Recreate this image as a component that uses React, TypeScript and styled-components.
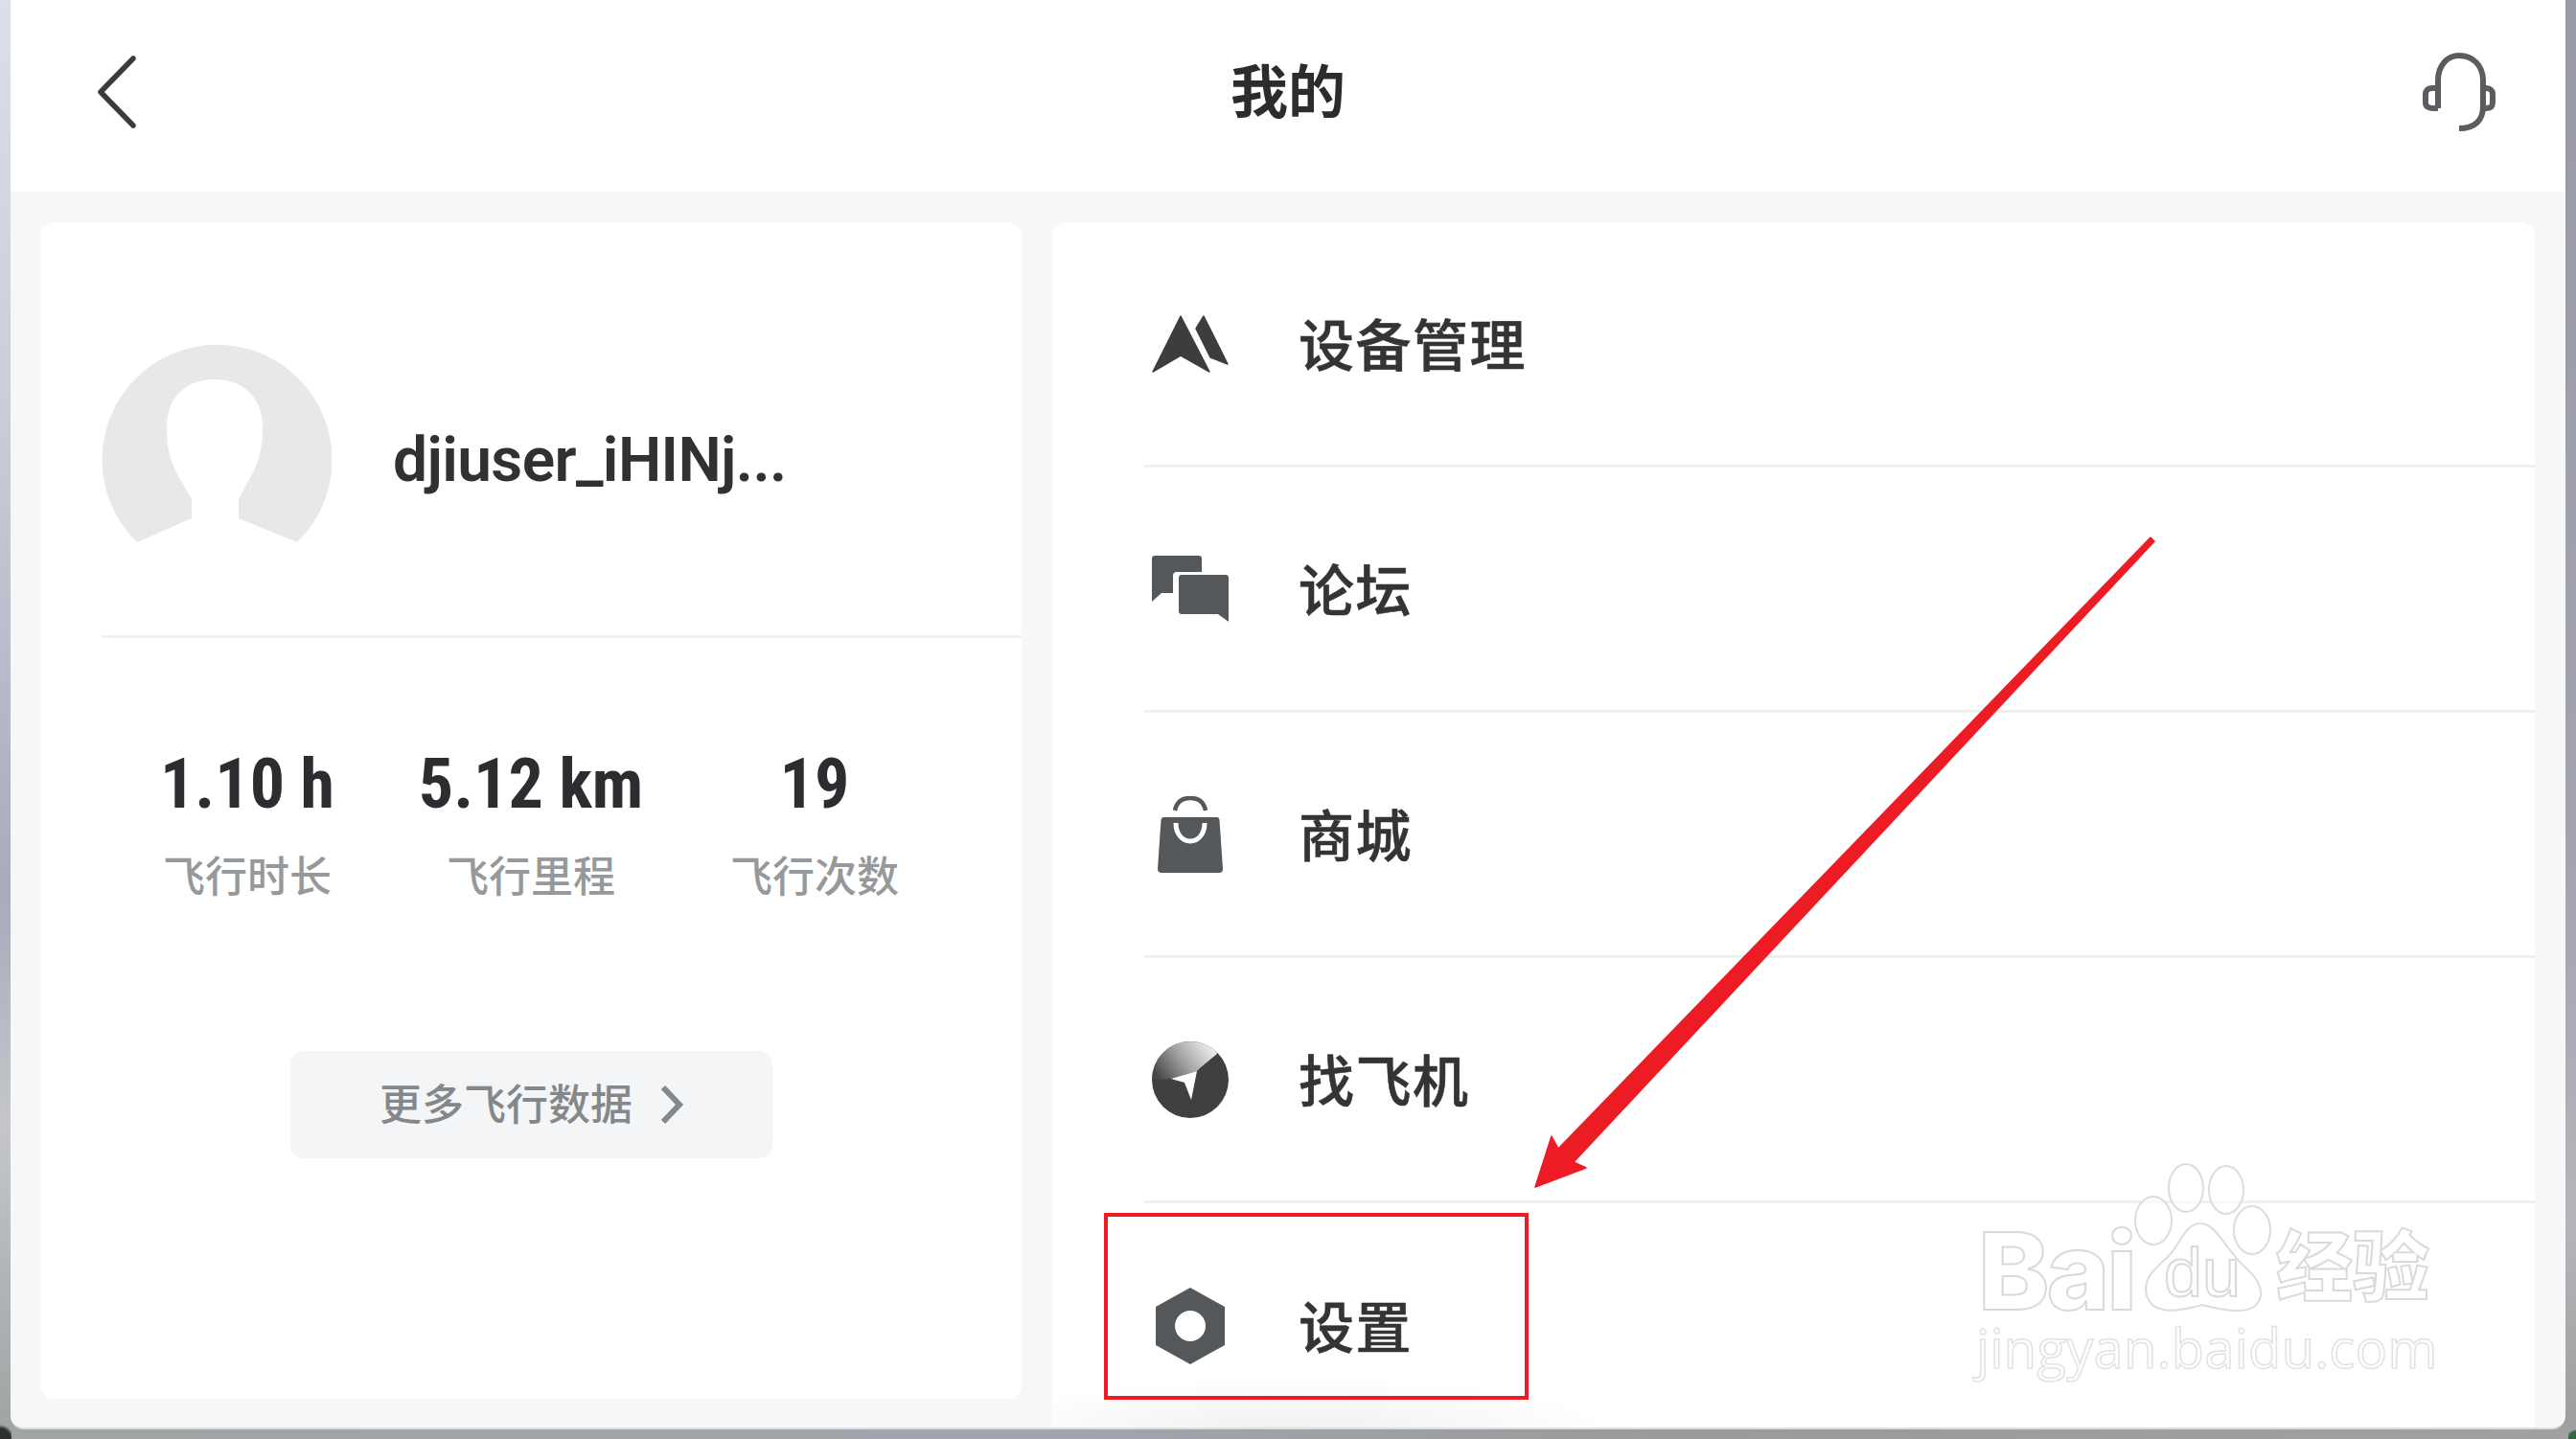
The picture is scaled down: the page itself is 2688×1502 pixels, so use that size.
import React from 'react'
import styled, { createGlobalStyle } from 'styled-components'

const GlobalStyle = createGlobalStyle`
  html, body {
    margin: 0;
    padding: 0;
    background: #9fa3a7;
  }
`

const Page = styled.div`
  position: relative;
  width: 2688px;
  height: 1502px;
  overflow: hidden;
  font-family: Roboto, 'Noto Sans CJK SC', sans-serif;
  background:
    linear-gradient(90deg, #a2a5a5 0%, #a0a6af 42%, #9a9a9a 65%, #a0a1a0 100%) bottom / 100% 12px no-repeat,
    linear-gradient(180deg, #dcdfe7 0%, #c9ccd8 30%, #a9aabb 62%, #c4c6cb 78%, #9fa3a3 100%) left / 50% 100% no-repeat,
    linear-gradient(180deg, #9899a9 0%, #a3a3b2 60%, #b6b5ba 85%, #9c9d9d 100%) right / 50% 100% no-repeat;

  /* device body showing at the two bottom corners */
  &::before {
    content: '';
    position: absolute;
    left: 0;
    bottom: 0;
    width: 12px;
    height: 16px;
    background: radial-gradient(circle at 0 100%, #2e2f30 55%, transparent 75%);
  }
  &::after {
    content: '';
    position: absolute;
    right: 0;
    bottom: 0;
    width: 8px;
    height: 10px;
    background: radial-gradient(circle at 100% 100%, #2c6b45 60%, transparent 80%);
  }
`

const Screen = styled.div`
  margin-left: 11px;
  width: 2666px;
  height: 1492px;
  box-sizing: border-box;
  border-bottom: 2px solid #dcdddd;
  border-radius: 0 0 14px 14px;
  overflow: hidden;
  display: flex;
  flex-direction: column;
  background: #f6f7f9;
`

const Header = styled.header`
  height: 200px;
  flex: none;
  background: #fff;
  display: grid;
  grid-template-columns: 1fr auto 1fr;
  align-items: center;
  padding: 0 73px 8px;
  box-sizing: border-box;
`

const BackSlot = styled.div`
  display: flex;
  padding-left: 18px;
`

const HelpSlot = styled.div`
  display: flex;
  justify-content: flex-end;
`

const Title = styled.h1`
  margin: 0 0 10px;
  font-size: 60px;
  font-weight: 700;
  color: #2b2c2e;
  font-family: 'Noto Sans CJK SC', sans-serif;
`

const Body = styled.div`
  flex: 1;
  display: flex;
  gap: 32px;
  padding: 32px 32px 0 31px;
  min-height: 0;
`

const ProfileCard = styled.section`
  width: 1024px;
  height: 1228px;
  flex: none;
  background: #fff;
  border-radius: 14px;
  display: flex;
  flex-direction: column;
`

const ProfileRow = styled.div`
  height: 434px;
  margin-left: 64px;
  box-sizing: border-box;
  border-bottom: 3px solid #f1f2f3;
  display: flex;
  align-items: center;
  gap: 64px;
  padding-top: 33px;
`

const UserName = styled.div`
  font-size: 64px;
  font-weight: 600;
  color: #2f3133;
  letter-spacing: -0.6px;
  margin-top: 33px;
`

const Stats = styled.div`
  display: flex;
  justify-content: center;
  padding-top: 111px;
`

const Stat = styled.div`
  width: 296px;
  display: flex;
  flex-direction: column;
  align-items: center;
`

const StatValue = styled.div`
  font-size: 72px;
  line-height: 84px;
  font-weight: 700;
  color: #2b2d30;
  font-stretch: 85%;
  white-space: nowrap;
`

const StatLabel = styled.div`
  font-family: 'Noto Sans CJK SC', sans-serif;
  font-size: 44px;
  font-weight: 500;
  line-height: 60px;
  margin-top: 21px;
  color: #96999c;
`

const MoreButton = styled.button`
  align-self: center;
  width: 503px;
  height: 112px;
  margin-top: 155px;
  border: 0;
  border-radius: 14px;
  background: #f4f5f6;
  color: #85888b;
  font-family: 'Noto Sans CJK SC', sans-serif;
  font-size: 44px;
  font-weight: 500;
  display: flex;
  align-items: center;
  justify-content: center;
  gap: 28px;
  padding: 0;
`

const MoreLabel = styled.span`
  margin: 0 0 6px 2px;
`

const MenuCard = styled.section`
  flex: 1;
  background:
    radial-gradient(ellipse 330px 50px at 250px 100%, #f0f0f0, rgba(240, 240, 240, 0)),
    #fff;
  border-radius: 14px 14px 0 0;
  display: flex;
  flex-direction: column;
`

const MenuRow = styled.div<{ $last?: boolean }>`
  height: 256px;
  flex: none;
  box-sizing: border-box;
  margin-left: 96px;
  padding-left: 8px;
  display: flex;
  align-items: center;
  gap: 73px;
  border-bottom: ${({ $last }) => ($last ? '0' : '3px solid #efeff0')};
`

const IconSlot = styled.div`
  width: 80px;
  flex: none;
  display: flex;
  justify-content: center;
  align-items: center;
`

const MenuLabel = styled.div`
  font-family: 'Noto Sans CJK SC', sans-serif;
  font-size: 58px;
  font-weight: 500;
  letter-spacing: 1.5px;
  color: #333436;
  -webkit-text-stroke: 0.6px #333436;
  margin-bottom: 4px;
`

const AnnotationLayer = styled.svg`
  position: absolute;
  inset: 0;
  pointer-events: none;
`

const HighlightBox = styled.div`
  position: absolute;
  left: 1152px;
  top: 1266px;
  width: 443px;
  height: 195px;
  box-sizing: border-box;
  border: 4px solid #ed1c24;
`

const Watermark = styled.div`
  position: absolute;
  left: 2050px;
  top: 1200px;
  width: 510px;
  height: 260px;
  pointer-events: none;
`

const WatermarkMark = styled.span`
  position: absolute;
  line-height: 1;
  white-space: nowrap;
  color: rgba(255, 255, 255, 0.7);
  -webkit-text-stroke: 2px #dadada;
`

const WatermarkBai = styled(WatermarkMark)`
  left: 14px;
  top: 81px;
  font-family: Inter, sans-serif;
  font-size: 112px;
  line-height: 90px;
  font-weight: 800;
  letter-spacing: -3px;
`

const WatermarkDu = styled(WatermarkMark)`
  left: 208px;
  top: 92px;
  font-family: 'Liberation Sans', sans-serif;
  font-size: 72px;
`

const WatermarkJingyan = styled(WatermarkMark)`
  left: 325px;
  top: 76px;
  font-family: 'Noto Sans CJK SC', sans-serif;
  font-size: 80px;
  font-weight: 900;
`

const WatermarkUrl = styled(WatermarkMark)`
  left: 12px;
  top: 178px;
  font-family: 'Open Sans', sans-serif;
  font-size: 56px;
  letter-spacing: 0.3px;
  -webkit-text-stroke-width: 1.5px;
  -webkit-text-stroke-color: #e2e2e2;
`

const BackIcon = () => (
  <svg width="40" height="76" viewBox="0 0 40 76" fill="none">
    <path d="M37 3 L3 38 L37 73" stroke="#3a3b3d" strokeWidth="5.5" strokeLinecap="round" strokeLinejoin="round" />
  </svg>
)

const HeadsetIcon = () => (
  <svg width="76" height="82" viewBox="0 0 76 82" fill="none">
    <path
      d="M16 58 V29 C16 13 26 3 38 3 C52 3 63 13 63 29 V56 C63 70 55 79 38 79"
      stroke="#5a5d60"
      strokeWidth="6"
    />
    <path d="M16 37 H10 C5 37 3 40 3 43 V52 C3 56 6 58 10 58 H16" stroke="#5a5d60" strokeWidth="6" />
    <path d="M63 37 H66 C71 37 73 40 73 43 V52 C73 56 71 58 66 58 H63" stroke="#5a5d60" strokeWidth="6" />
  </svg>
)

const AvatarIcon = () => (
  <svg width="240" height="208" viewBox="0 0 240 208">
    <path
      d="M37 206 A120 120 0 1 1 204 206 L143 181 V161 C156 135 168 125 168 85 C168 55 148 36 118 36 C88 36 68 55 68 85 C68 125 80 135 94 161 V181 Z"
      fill="#e7e8ea"
    />
  </svg>
)

const DeviceIcon = () => (
  <svg width="80" height="60" viewBox="0 0 80 60" fill="#3c3d3f" stroke="#3c3d3f" strokeWidth="1.5" strokeLinejoin="round">
    <path d="M30 1 L1 59 L30 42 L60 59 Z" />
    <path d="M54 1 L46 14 L61 44 L79 51 Z" />
  </svg>
)

const ForumIcon = () => (
  <svg width="80" height="69" viewBox="0 0 80 69" fill="#55585a">
    <path d="M3 0 H49 Q52 0 52 3 V17 H26 Q22 17 22 21 V39 H10 L0 48 V3 Q0 0 3 0 Z" />
    <path d="M31 20 H77 Q80 20 80 23 V69 L69 61 H31 Q28 61 28 58 V23 Q28 20 31 20 Z" />
  </svg>
)

const BagIcon = () => (
  <svg width="68" height="80" viewBox="0 0 68 80" fill="none">
    <path d="M18 15 C20 5 27 2 34 2 C41 2 48 5 50 15" stroke="#55585a" strokeWidth="4.5" />
    <path d="M6 22 H62 Q64 22 64.500 25 L68 76 Q68 80 64 80 H4 Q0 80 0 76 L3.500 25 Q4 22 6 22 Z" fill="#55585a" />
    <path d="M19 28 C19 40 26 47 34 47 C42 47 49 40 49 28" stroke="#fff" strokeWidth="5" />
  </svg>
)

const FindIcon = () => (
  <svg width="80" height="80" viewBox="0 0 80 80">
    <defs>
      <linearGradient id="sweep" gradientUnits="userSpaceOnUse" x1="10" y1="42" x2="60" y2="6">
        <stop offset="0" stopColor="#47484a" />
        <stop offset="0.5" stopColor="#a0a1a2" />
        <stop offset="1" stopColor="#e8e9e9" />
      </linearGradient>
      <clipPath id="dial">
        <circle cx="40" cy="40" r="40" />
      </clipPath>
    </defs>
    <circle cx="40" cy="40" r="40" fill="#3f4042" />
    <path d="M0 40 L20 39 L47 31 L51 27 L68 13 V0 H0 Z" fill="url(#sweep)" clipPath="url(#dial)" />
    <path d="M20 39 L47 31 L41 61 L34 43 Z" fill="#fff" />
  </svg>
)

const SettingsIcon = () => (
  <svg width="72" height="80" viewBox="0 0 72 80">
    <path
      fillRule="evenodd"
      d="M36 0 L72 20 V60 L36 80 L0 60 V20 Z M36 24 A16 16 0 1 0 36 56 A16 16 0 1 0 36 24 Z"
      fill="#55585a"
    />
  </svg>
)

const ChevronIcon = () => (
  <svg width="26" height="42" viewBox="0 0 26 42" fill="none">
    <path d="M4 3 L21 21 L4 39" stroke="#85888b" strokeWidth="6" />
  </svg>
)

const PawIcon = () => (
  <svg width="510" height="260" viewBox="2050 1200 510 260" fill="rgba(255,255,255,0.6)" stroke="#dcdcdc" strokeWidth="2">
    <ellipse cx="2281" cy="1240" rx="18" ry="25" />
    <ellipse cx="2323" cy="1242" rx="18" ry="25" />
    <ellipse cx="2247" cy="1274" rx="19" ry="25" />
    <ellipse cx="2350" cy="1284" rx="19" ry="25" />
    <path d="M2296 1277 C2312 1277 2320 1300 2340 1320 C2356 1334 2362 1346 2358 1356 C2352 1372 2328 1370 2298 1362 C2270 1370 2246 1372 2240 1352 C2236 1336 2246 1326 2262 1312 C2276 1298 2280 1277 2296 1277 Z" />
  </svg>
)

const stats = [
  { value: '1.10 h', label: '飞行时长' },
  { value: '5.12 km', label: '飞行里程' },
  { value: '19', label: '飞行次数' },
]

const menu = [
  { label: '设备管理', icon: <DeviceIcon /> },
  { label: '论坛', icon: <ForumIcon /> },
  { label: '商城', icon: <BagIcon /> },
  { label: '找飞机', icon: <FindIcon /> },
  { label: '设置', icon: <SettingsIcon /> },
]

export default function App() {
  return (
    <Page>
      <GlobalStyle />
      <Screen>
        <Header>
          <BackSlot>
            <BackIcon />
          </BackSlot>
          <Title>我的</Title>
          <HelpSlot>
            <HeadsetIcon />
          </HelpSlot>
        </Header>
        <Body>
          <ProfileCard>
            <ProfileRow>
              <AvatarIcon />
              <UserName>djiuser_iHINj...</UserName>
            </ProfileRow>
            <Stats>
              {stats.map((stat) => (
                <Stat key={stat.label}>
                  <StatValue>{stat.value}</StatValue>
                  <StatLabel>{stat.label}</StatLabel>
                </Stat>
              ))}
            </Stats>
            <MoreButton>
              <MoreLabel>更多飞行数据</MoreLabel>
              <ChevronIcon />
            </MoreButton>
          </ProfileCard>
          <MenuCard>
            {menu.map((item, index) => (
              <MenuRow key={item.label} $last={index === menu.length - 1}>
                <IconSlot>{item.icon}</IconSlot>
                <MenuLabel>{item.label}</MenuLabel>
              </MenuRow>
            ))}
          </MenuCard>
        </Body>
      </Screen>

      <HighlightBox />
      <Watermark>
        <PawIcon />
        <WatermarkBai>Bai</WatermarkBai>
        <WatermarkDu>du</WatermarkDu>
        <WatermarkJingyan>经验</WatermarkJingyan>
        <WatermarkUrl>jingyan.baidu.com</WatermarkUrl>
      </Watermark>
      <AnnotationLayer width="2688" height="1502" viewBox="0 0 2688 1502">
        {/* red arrow */}
        <polygon
          points="2244,561 2248,565 1642,1213 1655,1219 1602,1239 1619,1186 1626,1199"
          fill="#ed1c24"
          stroke="#ed1c24"
          strokeWidth="1.5"
          strokeLinejoin="round"
        />
      </AnnotationLayer>
    </Page>
  )
}
